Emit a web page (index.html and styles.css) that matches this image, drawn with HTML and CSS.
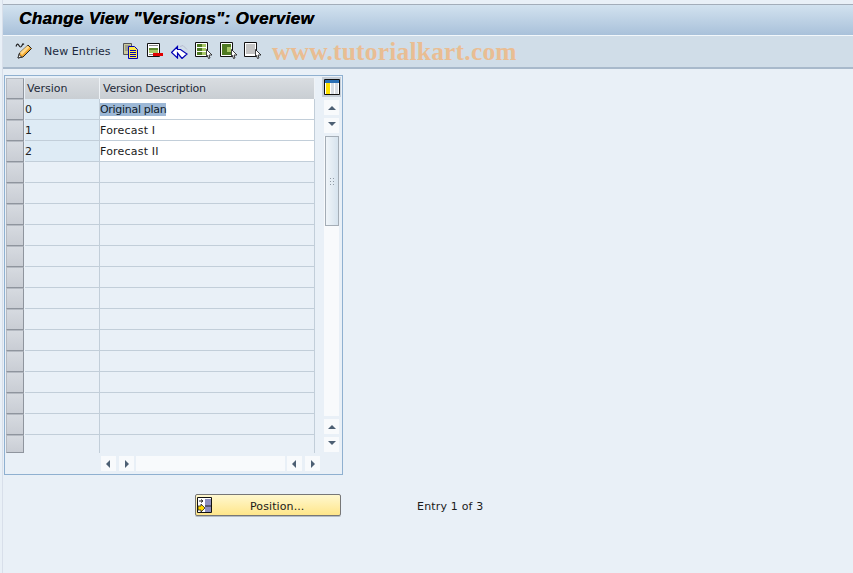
FILE: index.html
```html
<!DOCTYPE html>
<html lang="en">
<head>
<meta charset="utf-8">
<title>Change View "Versions": Overview</title>
<link rel="stylesheet" href="styles.css">
</head>
<body>
<div class="page">
  <header class="titlebar"><h1 class="title">Change View "Versions": Overview</h1></header>
  <div class="toolbar">
    <svg class="ico pencil" width="18" height="18" viewBox="0 0 18 18"><path d="M1 4.500c1-3 2-3 3-1s2 2 3 0 1-2 2-1" fill="none" stroke="#222" stroke-width="1.200"/><path d="M3 16l1.500-5L13 3l3.500 3.500L8 15z" fill="#f2a72e" stroke="#222"/><path d="M5 10.500L12.500 3.500l2 2L7 13z" fill="#ffd98a"/><path d="M3 16l1-3.500L6.500 15z" fill="#fff" stroke="#222" stroke-width=".8"/></svg>
    <span class="tool-label">New Entries</span>
    <svg class="ico copy" width="16" height="16" viewBox="0 0 16 16"><path d="M.5.500h8v11h-8z" fill="#c9c9a0" stroke="#555"/><path d="M2 3h5M2 5h5M2 7h5" stroke="#777"/><path d="M5.500 3.500h6l3 3v9h-9z" fill="#ffe94d" stroke="#0000b4"/><path d="M7 7.500h6M7 9.500h6M7 11.500h6M7 13.500h6" stroke="#0000b4"/></svg>
    <svg class="ico doc-del" width="16" height="16" viewBox="0 0 16 16"><path d="M.5.500h12v13H.5z" fill="#fff" stroke="#111"/><path d="M2 5h9v2H2z" fill="#5f8a2e"/><path d="M2 7h9v3H2z" fill="#a8c868"/><path d="M2 2.500h9M2 11.500h4" stroke="#888"/><path d="M6 10h10v3H6z" fill="#e00000"/></svg>
    <svg class="ico undo" width="17" height="16" viewBox="0 0 17 16"><path d="M.5 9.500l6-6v3h3l6.500 4.500-5 4.500-4.500-5.500H6.500v5z" fill="#fff" stroke="#0000b4" stroke-width="1.200"/><path d="M9 3.500l3-1 4 4" fill="none" stroke="#b8bcd0"/></svg>
    <svg class="ico doc-a" width="18" height="17" viewBox="0 0 18 17"><path d="M.5.500h12v14H.5z" fill="#fff" stroke="#111"/><path d="M2 2h9v3H2zM2 6h9v3H2zM2 10h9v3H2z" fill="#4f7a22"/><path d="M7 2h4v3H7zM7 6h4v3H7zM7 10h4v3H7z" fill="#a8c868"/><path d="M11.500 7.500l5.500 5.500h-3l1 3-1.500.500-1-3-1 1z" fill="#fff" stroke="#111" stroke-width=".8"/></svg>
    <svg class="ico doc-b" width="18" height="17" viewBox="0 0 18 17"><path d="M.5.500h12v14H.5z" fill="#fff" stroke="#111"/><path d="M2 2h9v11H2z" fill="#4f7a22"/><path d="M7 5h4v5H7z" fill="#a8c868"/><path d="M11.500 7.500l5.500 5.500h-3l1 3-1.500.500-1-3-1 1z" fill="#fff" stroke="#111" stroke-width=".8"/></svg>
    <svg class="ico doc-c" width="18" height="17" viewBox="0 0 18 17"><path d="M.5.500h12v14H.5z" fill="#fff" stroke="#111"/><path d="M2 3h9M2 5h9M2 7h9M2 9h9M2 11h9" stroke="#8a8a8a"/><path d="M11.500 7.500l5.500 5.500h-3l1 3-1.500.500-1-3-1 1z" fill="#fff" stroke="#111" stroke-width=".8"/></svg>
    <span class="watermark">www.tutorialkart.com</span>
  </div>
  <main class="content">
    <section class="panel">
      <div class="panel-main">
        <div class="grid">
          <div class="row head"><span class="sel"></span><span class="hcell ver">Version</span><span class="hcell desc">Version Description</span></div>
          <div class="row"><span class="sel"></span><span class="cell ver key">0</span><span class="cell desc filled"><span class="selected">Original plan</span></span></div>
          <div class="row"><span class="sel"></span><span class="cell ver key">1</span><span class="cell desc filled">Forecast I</span></div>
          <div class="row"><span class="sel"></span><span class="cell ver key">2</span><span class="cell desc filled">Forecast II</span></div>
          <div class="row"><span class="sel"></span><span class="cell ver"></span><span class="cell desc"></span></div>
          <div class="row"><span class="sel"></span><span class="cell ver"></span><span class="cell desc"></span></div>
          <div class="row"><span class="sel"></span><span class="cell ver"></span><span class="cell desc"></span></div>
          <div class="row"><span class="sel"></span><span class="cell ver"></span><span class="cell desc"></span></div>
          <div class="row"><span class="sel"></span><span class="cell ver"></span><span class="cell desc"></span></div>
          <div class="row"><span class="sel"></span><span class="cell ver"></span><span class="cell desc"></span></div>
          <div class="row"><span class="sel"></span><span class="cell ver"></span><span class="cell desc"></span></div>
          <div class="row"><span class="sel"></span><span class="cell ver"></span><span class="cell desc"></span></div>
          <div class="row"><span class="sel"></span><span class="cell ver"></span><span class="cell desc"></span></div>
          <div class="row"><span class="sel"></span><span class="cell ver"></span><span class="cell desc"></span></div>
          <div class="row"><span class="sel"></span><span class="cell ver"></span><span class="cell desc"></span></div>
          <div class="row"><span class="sel"></span><span class="cell ver"></span><span class="cell desc"></span></div>
          <div class="row"><span class="sel"></span><span class="cell ver"></span><span class="cell desc"></span></div>
          <div class="row last"><span class="sel"></span><span class="cell ver"></span><span class="cell desc"></span></div>
        </div>
        <div class="vscroll">
          <div class="config">
            <svg width="16" height="16" viewBox="0 0 16 16"><path d="M.5.500h15v15H.5z" fill="#fff" stroke="#111"/><path d="M1 1h14v3H1z" fill="#2a6fb5"/><path d="M2 4h4v11H2z" fill="#ffe100"/><path d="M7 4h3v11H7zM11 4h3v11h-3z" fill="#d8dde4"/></svg>
          </div>
          <span class="sbtn up"><i class="tri tri-up"></i></span>
          <span class="sbtn down"><i class="tri tri-down"></i></span>
          <div class="vtrack">
            <div class="thumb"><i class="grip"></i></div>
          </div>
          <span class="sbtn up"><i class="tri tri-up"></i></span>
          <span class="sbtn down"><i class="tri tri-down"></i></span>
        </div>
      </div>
      <div class="hscroll">
        <span class="sbtn"><i class="tri tri-left"></i></span>
        <span class="sbtn"><i class="tri tri-right"></i></span>
        <span class="htrack"></span>
        <span class="sbtn"><i class="tri tri-left"></i></span>
        <span class="sbtn"><i class="tri tri-right"></i></span>
      </div>
    </section>
    <div class="actions">
      <button class="position" type="button">
        <svg class="pos-ico" width="16" height="16" viewBox="0 0 16 16"><path d="M.5.500h14v15H.5z" fill="#fff" stroke="#111"/><path d="M8 2h6v13H8z" fill="#8d8fc0"/><path d="M2 4h3M4 2.500l2 1.500-2 1.500M8 9h6" fill="none" stroke="#222"/><path d="M1 9h3V7l4 4-4 4v-2H1z" fill="#ffd800" stroke="#222" stroke-width=".8"/></svg>
        <span class="pos-label">Position...</span>
      </button>
      <span class="entry">Entry 1 of 3</span>
    </div>
  </main>
</div>
</body>
</html>
```

FILE: styles.css
```css
* { box-sizing: border-box; }
html, body { margin: 0; padding: 0; }
body {
  width: 853px;
  height: 573px;
  overflow: hidden;
  background: #e9f0f7;
  font-family: "DejaVu Sans", sans-serif;
  font-size: 11px;
  color: #1a1a1a;
}
.page {
  height: 573px;
  margin-left: 2px;
  border-left: 1px solid #d8dfea;
  padding-top: 4px;
  background: #e9f0f7;
}
.page::before {
  content: "";
  display: block;
  height: 1px;
  background: #a3adb9;
}
.titlebar {
  height: 31px;
  background: linear-gradient(#d2e2ef, #a9c1da);
  border-bottom: 1px solid #f2f7fb;
  display: flex;
  align-items: center;
  padding-left: 16px;
  padding-bottom: 2px;
}
.title {
  margin: 0;
  font-family: "Liberation Sans", sans-serif;
  font-size: 17px;
  font-weight: bold;
  font-style: italic;
  letter-spacing: .37px;
  color: #000;
  white-space: nowrap;
  text-shadow: .4px 0 0 #000;
}
.toolbar {
  height: 33px;
  background: #d0dde8;
  border-bottom: 2px solid #a8b9cb;
  display: flex;
  align-items: center;
  padding-left: 12px;
  padding-bottom: 2px;
}
.ico { flex: none; display: block; }
.pencil { margin-right: 11px; }
.tool-label {
  color: #1c2a40;
  white-space: nowrap;
  width: 67px;
  margin-top: 2px;
  margin-right: 12px;
  letter-spacing: .08px;
}
.copy { margin-right: 8px; }
.doc-del { margin-right: 8px; }
.undo { margin-right: 7px; }
.doc-a { margin-right: 7px; }
.doc-b { margin-right: 6px; }
.doc-c { margin-right: 10px; }
.watermark {
  font-family: "Liberation Serif", serif;
  font-size: 25.500px;
  font-weight: bold;
  color: #e9bd93;
  white-space: nowrap;
  letter-spacing: .2px;
  margin-top: 3px;
}
.content { padding: 6px 0 0 1px; }
.panel {
  width: 339px;
  height: 400px;
  border: 1px solid #8fb0d0;
  background: #e9f0f7;
  padding: 2px 1px 0 1px;
}
.panel-main { display: flex; height: 375px; }
.grid { width: 309px; flex: none; }
.row { display: flex; height: 21px; }
.sel {
  width: 18px;
  flex: none;
  background: linear-gradient(#d6dae0, #c9cdd4);
  border: 1px solid #b5bac2;
  border-right-color: #8f959e;
  border-bottom-color: #8f959e;
  margin-right: 1px;
}
.hcell, .cell {
  display: block;
  height: 21px;
  line-height: 22px;
  white-space: nowrap;
  overflow: hidden;
}
.hcell {
  background: linear-gradient(#d9dde1, #c9ced3);
  border-right: 1px solid #eef2f6;
  padding-left: 3px;
  color: #1e2a38;
}
.hcell.ver { padding-left: 2px; }
.hcell.desc { letter-spacing: -.2px; }
.cell {
  border-bottom: 1px solid #c2ced9;
  border-right: 1px solid #c2ced9;
  background: #e9f0f7;
}
.ver { width: 75px; flex: none; }
.desc { width: 215px; flex: none; }
.key { background: #deebf5; padding-left: 0; color: #222; }
.cell.filled { background: #fff; letter-spacing: .2px; }
.selected { background: #9db8d6; color: #0f1a28; letter-spacing: -.3px; }
.last { height: 18px; }
.last .cell { height: 18px; border-bottom: none; }
.vscroll {
  width: 19px;
  margin-left: 7px;
  flex: none;
  display: flex;
  flex-direction: column;
  align-items: flex-end;
}
.config {
  width: 19px;
  height: 20px;
  margin-top: -1px;
  background: #c5ced8;
  padding: 2px 0 0 2px;
  flex: none;
}
.config svg { display: block; }
.sbtn {
  width: 15px;
  height: 15px;
  flex: none;
  background: #f8fafc;
  display: flex;
  align-items: center;
  justify-content: center;
}
.vscroll .sbtn { margin-right: 2px; margin-top: 3px; }
.tri { display: block; width: 0; height: 0; border-style: solid; border-color: transparent; }
.tri-up { border-width: 0 4px 4px; border-bottom-color: #4c5f73; }
.tri-down { border-width: 4px 4px 0; border-top-color: #4c5f73; margin-top: -3px; }
.tri-left { border-width: 4px 4px 4px 0; border-right-color: #4c5f73; margin-left: -1px; }
.tri-right { border-width: 4px 0 4px 4px; border-left-color: #4c5f73; }
.vtrack {
  width: 15px;
  height: 280px;
  margin-top: 3px;
  margin-right: 2px;
  background: #f8fafc;
  flex: none;
}
.thumb {
  width: 14px;
  height: 90px;
  margin-left: 1px;
  background: linear-gradient(90deg, #f0f5f9, #d6e3ee);
  border: 1px solid #a4adb6;
  display: flex;
  align-items: center;
  justify-content: center;
}
.grip {
  display: block;
  width: 6px;
  height: 8px;
  background-image: radial-gradient(#8f9aa5 1px, transparent 1px);
  background-size: 3px 3px;
}
.hscroll {
  display: flex;
  margin-top: 3px;
  padding-left: 95px;
  gap: 3px;
}
.htrack { width: 149px; height: 15px; background: #f8fafc; margin: 0 -1px; }
.actions {
  display: flex;
  align-items: center;
  margin-top: 19px;
  margin-left: 191px;
}
.position {
  width: 146px;
  height: 22px;
  padding: 0;
  border: 1px solid #777;
  border-radius: 2px;
  background: linear-gradient(#fff8cf, #ffe68a);
  font: inherit;
  color: #1a1a1a;
  display: flex;
  align-items: center;
  box-shadow: 0 1px 0 #b5bcc4;
}
.pos-ico { margin-left: 1px; flex: none; }
.pos-label { margin-left: 37px; margin-top: 2px; white-space: nowrap; letter-spacing: .1px; }
.entry { margin-left: 76px; margin-top: 2px; white-space: nowrap; color: #1a1a1a; letter-spacing: .18px; }
```
